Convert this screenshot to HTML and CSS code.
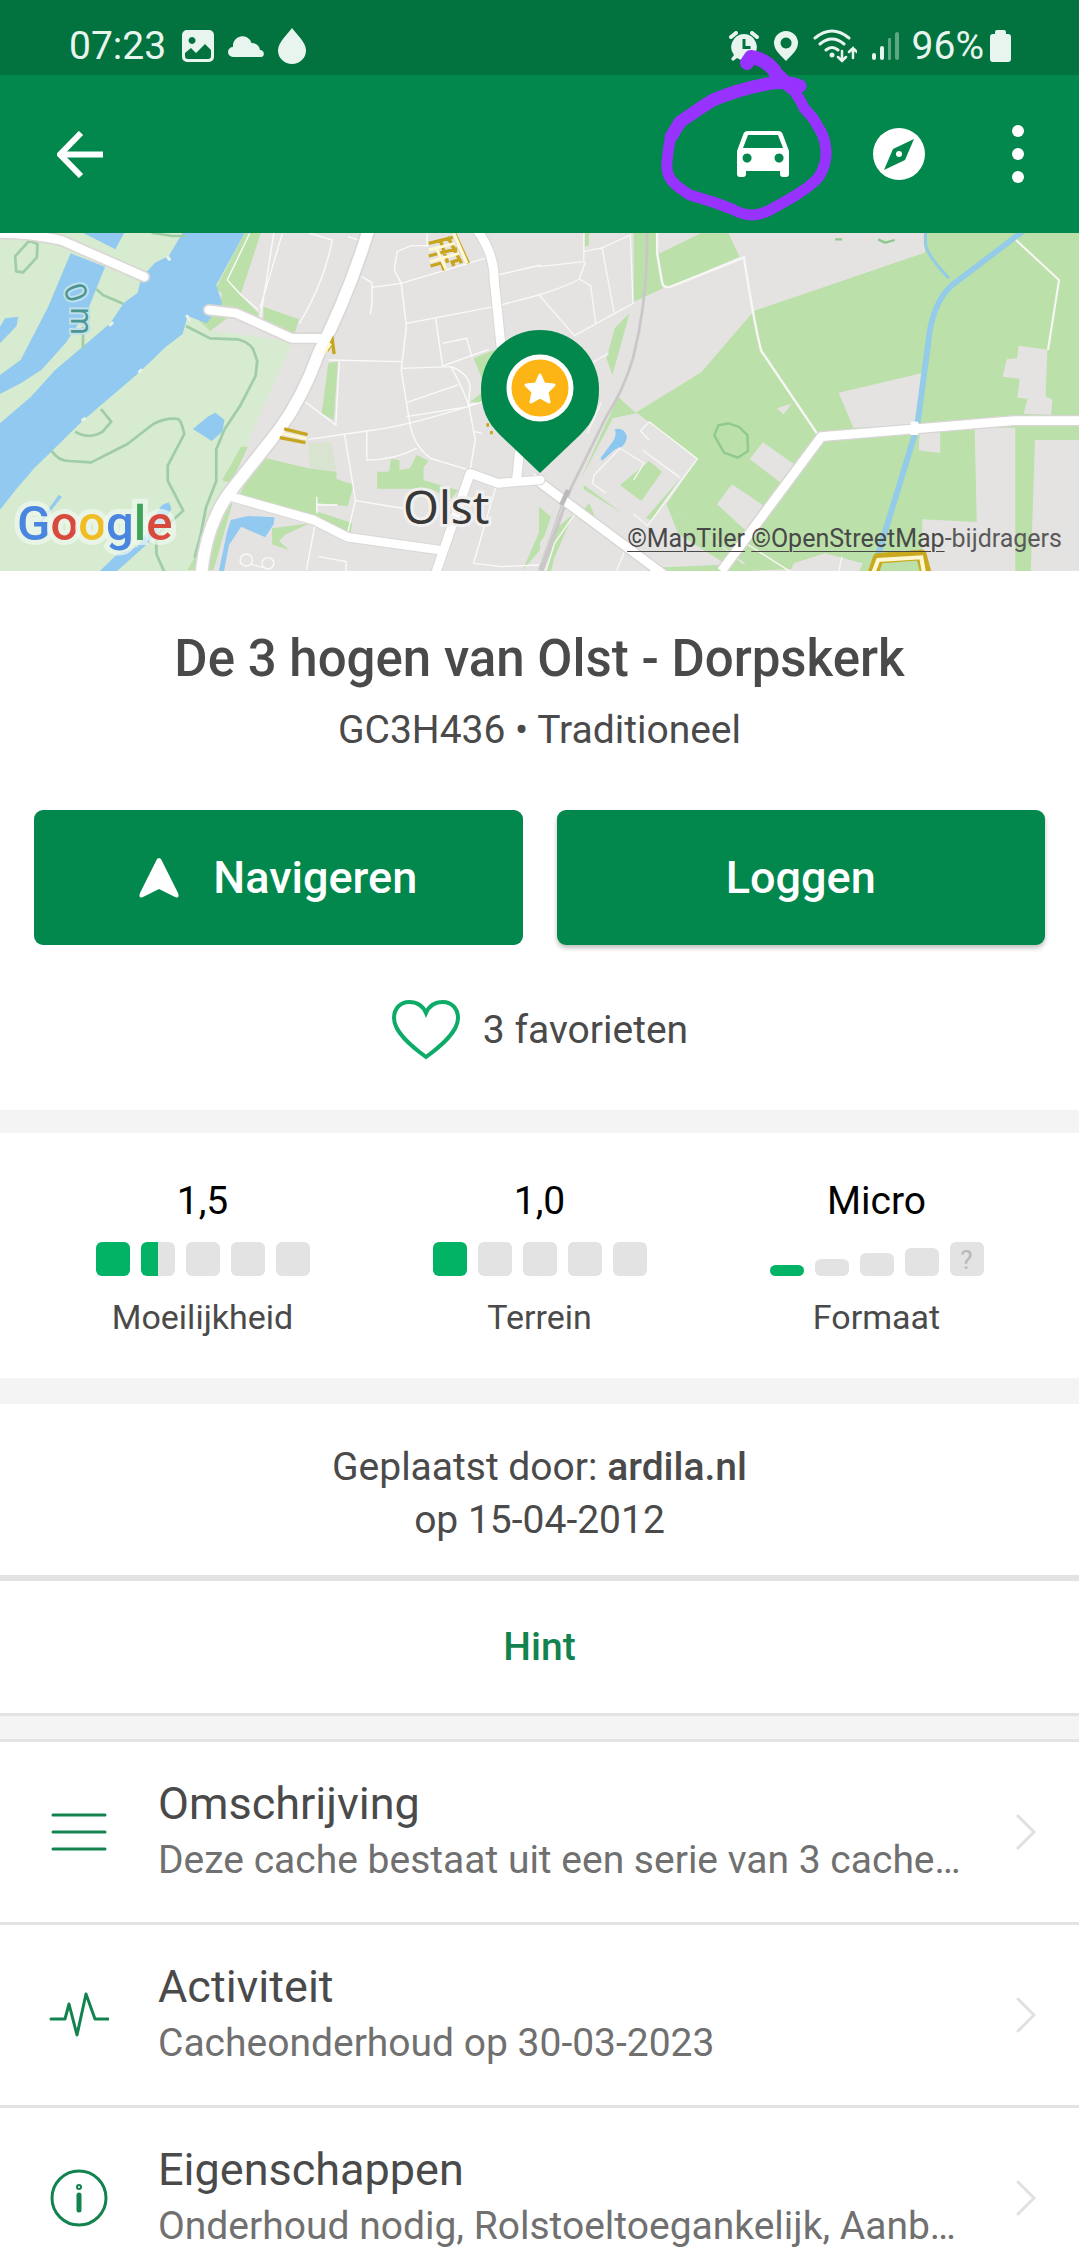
FILE: index.html
```html
<!DOCTYPE html>
<html lang="nl">
<head>
<meta charset="utf-8">
<meta name="viewport" content="width=device-width, initial-scale=1">
<title>De 3 hogen van Olst - Dorpskerk</title>
<link rel="stylesheet" href="styles.css">
</head>
<body>
<div class="screen">
  <div class="status">
    <div class="status-group">
      <span class="status-text">07:23</span>
      <svg class="st-image" viewBox="0 0 32 32" width="32" height="32"><path fill-rule="evenodd" d="M5 0h22a5 5 0 0 1 5 5v22a5 5 0 0 1-5 5H5a5 5 0 0 1-5-5V5a5 5 0 0 1 5-5zM10 7a3.500 3.500 0 1 0 .1 0zM3 23l6-5 5 5 9-9 6 6v6a3 3 0 0 1-3 3H6a3 3 0 0 1-3-3z"/></svg>
      <svg viewBox="0 0 36 21" width="36" height="21"><path d="M5 21a5 5 0 0 1 0-10 9.500 9.500 0 0 1 18.500-4c5 0 8 3 8.500 7 5 0 5 7 1 7z"/></svg>
      <svg viewBox="0 0 28 36" width="28" height="36"><path d="M14 0c4 6 14 14 14 22.500a14 13.500 0 0 1-28 0C0 14 10 6 14 0z"/></svg>
    </div>
    <div class="status-group status-right">
      <svg viewBox="0 0 30 30" width="30" height="30"><path fill-rule="evenodd" d="M15 3a13 13 0 0 1 10 21l3 4-2 2-4-3a13 13 0 0 1-14 0l-4 3-2-2 3-4A13 13 0 0 1 15 3zM13.500 8v10h8v-3h-5V8z"/><path d="M2 6l5-4M28 6l-5-4" stroke="#e8f5ee" stroke-width="4" stroke-linecap="round"/></svg>
      <svg viewBox="0 0 24 30" width="24" height="30"><path fill-rule="evenodd" d="M12 0a12 12 0 0 1 12 12c0 8-9 14-12 18C9 26 0 20 0 12A12 12 0 0 1 12 0zM12 6.500a5.500 5.500 0 1 0 .1 0z"/></svg>
      <svg viewBox="0 0 44 34" width="44" height="34"><g fill="none" stroke="#e8f5ee" stroke-width="3" stroke-linecap="round"><path d="M2 9q17-14 34 0M7 15q12-10 24 0M13 21q6-5 12 0"/><path stroke-width="2.500" d="M29 22v10M25 28l4 4 4-4M40 29V19M36 23l4-4 4 4"/></g><circle cx="19" cy="26" r="2.500"/></svg>
      <svg viewBox="0 0 27 30" width="27" height="30"><rect y="22" width="4" height="7" rx="2"/><rect x="8" y="15" width="4" height="14" rx="2"/><rect x="16" y="7" width="3" height="22" rx="1" opacity=".4"/><rect x="23" y="1" width="4" height="28" rx="2" opacity=".4"/></svg>
      <span class="status-text percent">96%</span>
      <svg viewBox="0 0 21 32" width="21" height="32"><path d="M7 0h7a2 2 0 0 1 2 2v2h2a3 3 0 0 1 3 3v22a3 3 0 0 1-3 3H3a3 3 0 0 1-3-3V7a3 3 0 0 1 3-3h2V2a2 2 0 0 1 2-2z"/></svg>
    </div>
  </div>

  <header class="appbar">
    <button class="icon-button" aria-label="Terug"><svg viewBox="0 0 46 47" width="46" height="47"><path d="M24 2L3 23.500 24 45M3 23.500h43" fill="none" stroke="#fff" stroke-width="6"/></svg></button>
    <div class="actions">
      <button class="icon-button" aria-label="Route"><svg viewBox="0 0 52 46" width="52" height="46"><path fill="#fff" fill-rule="evenodd" d="M11 0h30c3 0 4 1 5 4l6 16v23q0 3-3 3h-3q-3 0-3-3v-3H9v3q0 3-3 3H3q-3 0-3-3V20L6 4c1-3 2-4 5-4zM11 4L6 17h40L41 4zM10 22.500a4.500 4.500 0 1 0 .1 0zM42 22.500a4.500 4.500 0 1 0 .1 0z"/></svg></button>
      <button class="icon-button" aria-label="Kompas"><svg viewBox="0 0 52 52" width="52" height="52"><circle cx="26" cy="26" r="26" fill="#fff"/><path d="M41 11L32 32 11 42 20 21z" fill="#02874d"/><circle cx="26" cy="26" r="3" fill="#fff"/></svg></button>
      <button class="icon-button" aria-label="Meer"><svg viewBox="0 0 12 58" width="12" height="58"><g fill="#fff"><circle cx="6" cy="6" r="6"/><circle cx="6" cy="29" r="6"/><circle cx="6" cy="52" r="6"/></g></svg></button>
    </div>
    <svg class="scribble" viewBox="0 0 176 176" width="176" height="176"><g fill="none" stroke="#9732ff" stroke-linecap="round" stroke-linejoin="round"><path stroke-width="14" d="M84 17L88 11Q102 13 111 24"/><path stroke-width="13" d="M137 40Q122 34 104 38 76 43 50 54L36 63 17 76 8 91"/><path stroke-width="11" d="M8 91Q5 102 4 117 3 128 9 135 14 141 27 149L50 156 69 163Q80 169 89 169 97 169 107 164L130 151Q148 140 155 132 164 119 163 104 162 92 157 84L150 72 141 62Q135 48 122 34L109 22"/><path stroke-width="12" d="M112 30L128 42"/></g></svg>
  </header>

  <section class="map" aria-label="Kaart van Olst">
    <svg class="map-art" viewBox="0 0 1079 338" preserveAspectRatio="xMidYMid slice">
      <rect width="1079" height="338" fill="#e4e3e2"/>
      <!-- east: fields, rail, canal -->
      <g transform="translate(539 -3) scale(.3444 .3333)">
        <g fill="#bbe0a9">
          <path d="M275 0h65l20 175-85 40zM133 0h12v45l-12 5zM345 73L400 45 470 10h80l32 70-210 93-15-5zM624 243L1120 68 1122 0h450v1030H940L880 1010 600 1023 370 1023 120 850zM230 500L280 548 490 415 645 368 830 620 640 900 560 1023 455 900 370 823 460 687 285 550 215 565 120 750z"/>
          <path d="M263 250l-50 185-17-50 24-90z"/>
        </g>
        <path d="M120 755l95-190 70-15 175 137-90 136 90 68 140 110-500 23 20-80 40-90zM870 488l240-58-12 158-185 5zM650 637l90 65-40 55-88-70zM560 763l90 62-48 78-85-80zM1105 607h60v62l-62-8zM1265 593h118v430h-270V868l158 8zM1440 630h128v393H1428zM1393 347l83 12-5 140 20 10-4 45-80-3 12-45-30-3 7-57-50-6 12-52 30-3zM690 535l45-15-25 33zM740 1000l90-30 110 30-10 25H730z" fill="#e4e3e2"/>
        <path d="M235 765L320 693l37 32-60 88zM130 765l112 85-112-72zM310 865l100-120-85 125zM370 823l90 68 130 110-15 22-170-110zM20 1023L45 900 100 852l-55 130-10 41zM0 830l35 30-20 60-15 20z" fill="#bbe0a9"/>
        <path d="M220 598q25-8 35 20 0 20-15 32-20 5-32 20l-25 22-4-8 36-50q12-20 5-36z" fill="#8cc7ef"/>
        <path d="M550 580l30 10 25 25 2 48-30 20-40-15-28-52 12-30z" fill="none" stroke="#90c990" stroke-width="7"/>
        <path d="M860 28h20M985 28l20 10 28-8" fill="none" stroke="#90c990" stroke-width="7"/>
        <path d="M1122 0v40q0 30 68 105" fill="none" stroke="#93cbe8" stroke-width="9"/>
        <path d="M1410 0L1200 165Q1140 220 1130 340L1098 590 970 1023" fill="none" stroke="#93cbe8" stroke-width="17"/>
        <g fill="none" stroke="#f8f7f6" stroke-width="4">
          <path d="M343 0v70l15 90q5 15 25 10L595 82q30 200 50 280L810 615" stroke-width="7"/>
          <path d="M1385 30l125 120-32 210" stroke-width="6"/>
          <path d="M0 110l130-15V0M130 65l55-12 80-38 8 205-170 97L0 195q90-30 117-48l18-52M117 147l33 20 15 115M183 53l35 195M150 400l52-30M180 520l-40 90M320 575l140 112-145 200-40-35M320 575l-25 28 25 28M300 660l110 83M195 790l-40-30 5-25 75-80 70 45-30 50M105 850L45 940 20 1023M250 960l-25 63M600 940l130 85M880 980l-10 45"/>
        </g>
        <path d="M313 0q5 200-40 385-30 100-75 170L95 770 10 990" fill="none" stroke="#c9c7c7" stroke-width="8"/>
        <path d="M80 800L5 1023" fill="none" stroke="#c9c7c7" stroke-width="16"/>
        <path d="M75 810L5 1000" fill="none" stroke="#e4e3e2" stroke-width="2"/>
        <g fill="none" stroke="#d8d5d4" stroke-width="34"><path d="M-20 740L370 1040M530 1023L820 620 1380 572h190"/></g>
        <g fill="none" stroke="#fff" stroke-width="26" stroke-linejoin="round"><path d="M-20 740L370 1040M530 1023L820 620 1380 572h190"/></g>
        <path d="M1090 575v40" stroke="#fff" stroke-width="22"/>
        <path d="M85 780L65 825" stroke="#bbb" stroke-width="14"/>
        <path d="M970 1030l15-45 125-10 15 60" fill="none" stroke="#c8a91f" stroke-width="32" stroke-linejoin="round"/>
        <path d="M970 1030l15-40 125-8 10 60" fill="none" stroke="#fff8d2" stroke-width="12"/>
      </g>
      <!-- west: river IJssel, floodplain and village -->
      <g transform="translate(0 -3) scale(.3444 .3333)">
        <path d="M0 0h715l-85 170-30 130 250 35-140 320-100 200-60 175H0z" fill="#d6ebcf"/>
        <path d="M715 0h45l-60 190-35-30 85 90 0 15-65-20-75 58-40-40 60-30 15-40-17-20zM765 230l103 38-13 45-90-45zM953 400l28-5-12 175-35-20zM755 680l140 35 82 10v22l50 17-17 65-92-10v25l105 35-5 30-110-45-215-65zM700 650h20l-50 110-25-10zM1095 725h35l5-38 25 3v30l30-5 20-40 35 18-15 18v40l100 30-20 25-60-30h-155zM790 895l110-15-70 33-20 20 30 28-50-18zM640 840l35-20-55 200H545zM1375 385l60-25-30 100zM1365 515l50-40v45zM1568 900l-50 120 50-60z" fill="#bbe0a9"/>
        <path d="M895 640l65-5 18 88-78-10z" fill="#d8e3d0"/>
        <g fill="#91c9f0">
          <path d="M535 0h180l-87 165 17 55-45 60-55-22-15 54-50 40-75 75-85 75-80 70-90 92-50 50-50 60-50 65V580l90-80 70-80 80-70 80-70 40-62 40-30 10-45 40-45 40-20z"/>
          <path d="M205 70l100 40-50 130-65 100-70 80-60 40-60 32v-57l60-45 80-160zM225 0h140l-30 58zM0 290l15-25 38-5-5 28L0 340zM560 597l42-36 23-13 27 22-7 35-30 28zM290 1023l50-50 60-23 70-125 20-8 8 18-18 35-50 70-90 83zM670 870l50-12 77 4-2 20-25 40-70-32-35 55-15 80h-15l25-123zM105 890l65-95 10 5-65 85z"/>
        </g>
        <g fill="none" stroke="#a0cda8" stroke-width="8" stroke-linejoin="round">
          <path d="M85 32l24 10-2 40-40 45-20-3-3-45zM440 8l60 10h40M280 178l20 18 58 25M241 290v65M540 288l70 37 80 3q35 10 45 30l12 35-5 45-45 90-45 70-24 60v95l-30 80-15 80-18 70M293 537l30 38-25 30q-40 25-80 0M150 663q20 30 50 30l65 4 105-55 75-60q40-20 72-15 10 5 18 45l-48 95v45l45 90-78 75v55l25 58"/>
        </g>
        <g fill="none" stroke="#fafafa" stroke-width="4">
          <path d="M725 10L660 150l40 45 50 45M795 10l-40 260M820 10l-65 225M900 10l65 20q-25 130-95 250M1050 140l30 18 0 65-5 30M1080 172l85-12 243-75M1165 160l-20-40 8-55 40-18h50M1165 160l15 130-15 130 25 160q10 65 60 105l110 35M1180 280l255-50 130-35M1265 265l20 143 135-50M1285 340l70-15 15 55M955 390l210 5M1165 415l145-5q50 100 50 120l-180 30M1330 465l-150 53M1310 410q50 20 55 60l-5 55 25-5M985 395l-10 190-90-70M895 628l170-25q110-10 345-90M1000 610l32 200-25 110M1065 600v90q80 0 145-35M1360 520l20 110-15 90M1400 610l-22-5M1032 812l150 25M915 880l-25 140M925 980l80 15 0 28M1445 135l125-30M1240 10v40M1010 20l60 20M1440 770l-65 230 80 10 110-5M920 800v50M980 825h-60"/>
          <circle cx="715" cy="990" r="18"/><circle cx="778" cy="1000" r="17"/><path d="M728 1003l38 10"/>
        </g>
        <path d="M543 258l7 12M320 285l6-6M487 82l5 6M405 425l5-5M240 570l6-4" stroke="#e9f3e5" stroke-width="9" stroke-linecap="round"/>
        <g fill="none" stroke="#dad7d6" stroke-width="36" stroke-linecap="round" stroke-linejoin="round">
          <path d="M0 10q90 0 180 22l238 108M607 240l80 10 160 75 90 0"/>
          <path d="M670 800l240 70 100 52 265 38" stroke-width="32"/>
          <path d="M1385 0q50 70 50 150l20 200M1265 1030l100-300 80 30 123-10M1500 750l8-80" stroke-width="32"/>
          <path d="M1070 0q-60 200-145 370-45 130-115 230L680 770q-80 100-95 260" stroke-width="44"/>
        </g>
        <g fill="none" stroke="#fff" stroke-width="26" stroke-linecap="round" stroke-linejoin="round">
          <path d="M0 10q90 0 180 22l238 108M607 240l80 10 160 75 90 0"/>
          <path d="M670 800l240 70 100 52 265 38"/>
          <path d="M1385 0q50 70 50 150l20 200M1265 1030l100-300 80 30 123-10M1500 750l8-80"/>
          <path d="M1070 0q-60 200-145 370-45 130-115 230L680 770q-80 100-95 260" stroke-width="34"/>
        </g>
        <g fill="none" stroke="#c8a51f" stroke-width="10">
          <path d="M1245 40l70-18M1245 78l82-22M1250 108l32-9 8 22M1318 108l-5-12 24-8M1278 28l22 70M1320 10l40 90M1300 20l40 80M812 623l75 15M825 597l68 17M950 362l15-30 5 40M1412 585h8M1423 608h8"/>
        </g>
        <g fill="none" stroke="#fff8d2" stroke-width="9"><path d="M1245 60l75-20M1248 95l85-25M1265 50l30 68M1318 10l38 90M818 610l72 16M940 370l20-30"/></g>
      </g>
      <g class="contour-label"><text transform="translate(63 55) rotate(70)">0</text><text transform="translate(71 74) rotate(90)">m</text></g>
      <text class="town" x="403" y="291">Olst</text>
      <path d="M540 97a59 59 0 0 1 59 59c0 20-6 33-19 46l-40 38-40-38c-13-13-19-26-19-46a59 59 0 0 1 59-59z" fill="#02874d"/>
      <circle cx="540" cy="155" r="31" fill="#fdb515" stroke="#fff" stroke-width="5"/>
      <path d="M540 142l4 9 10 1-7 7 2 10-9-5-9 5 2-10-7-7 10-1z" fill="#fff" stroke="#fff" stroke-width="3" stroke-linejoin="round"/>
    </svg>
    <div class="map-foot">
      <div class="google"><span class="g-blue">G</span><span class="g-red">o</span><span class="g-yellow">o</span><span class="g-blue">g</span><span class="g-green">l</span><span class="g-red">e</span></div>
      <div class="credit"><a href="#maptiler">©MapTiler</a> <a href="#osm">©OpenStreetMap</a>-bijdragers</div>
    </div>
  </section>

  <main>
    <section class="intro">
      <h1>De 3 hogen van Olst - Dorpskerk</h1>
      <p class="code">GC3H436 • Traditioneel</p>
      <div class="buttons">
        <button class="primary"><svg viewBox="0 0 40 40" width="40" height="40"><path d="M20 0q2 0 3 3l16 32q2 6-3 4L20 31 4 39q-5 2-3-4L17 3q1-3 3-3z" fill="#fff"/></svg>Navigeren</button>
        <button class="primary raised">Loggen</button>
      </div>
      <div class="favorites"><svg viewBox="0 0 70 60" width="70" height="60"><path d="M35 57C20 46 3 32 3 18 3 8 10 2 18 2c8 0 14 4 17 11C38 6 44 2 52 2c8 0 15 6 15 16 0 14-17 28-32 39z" fill="none" stroke="#0cab67" stroke-width="4"/></svg><span>3 favorieten</span></div>
    </section>

    <section class="stats">
      <div class="stat"><p class="value">1,5</p><div class="boxes"><i class="box full"></i><i class="box half"></i><i class="box"></i><i class="box"></i><i class="box"></i></div><p class="label">Moeilijkheid</p></div>
      <div class="stat"><p class="value">1,0</p><div class="boxes"><i class="box full"></i><i class="box"></i><i class="box"></i><i class="box"></i><i class="box"></i></div><p class="label">Terrein</p></div>
      <div class="stat"><p class="value">Micro</p><div class="boxes"><i class="box full size-1"></i><i class="box size-2"></i><i class="box size-3"></i><i class="box size-4"></i><span class="box unknown">?</span></div><p class="label">Formaat</p></div>
    </section>

    <section class="owner">
      <p>Geplaatst door: <b>ardila.nl</b></p>
      <p>op 15-04-2012</p>
    </section>
    <button class="hint">Hint</button>

    <nav class="list">
      <a class="row" href="#omschrijving">
        <svg class="row-icon" viewBox="0 0 60 60" width="60" height="60"><path d="M4 13h52M4 30h52M4 47h52"/></svg>
        <span class="row-text"><span class="row-title">Omschrijving</span><span class="row-sub">Deze cache bestaat uit een serie van 3 cache…</span></span>
        <svg class="chevron" viewBox="0 0 20 36" width="20" height="36"><path d="M2 2l16 16L2 34"/></svg>
      </a>
      <a class="row" href="#activiteit">
        <svg class="row-icon" viewBox="0 0 60 60" width="60" height="60"><path d="M2 34h14l4-15 8 31 9-41 9 25h13"/></svg>
        <span class="row-text"><span class="row-title">Activiteit</span><span class="row-sub">Cacheonderhoud op 30-03-2023</span></span>
        <svg class="chevron" viewBox="0 0 20 36" width="20" height="36"><path d="M2 2l16 16L2 34"/></svg>
      </a>
      <a class="row" href="#eigenschappen">
        <svg class="row-icon" viewBox="0 0 60 60" width="60" height="60"><circle cx="30" cy="30" r="27"/><path stroke-width="5" d="M30 27v15"/><circle cx="30" cy="19" r="1" stroke-width="4"/></svg>
        <span class="row-text"><span class="row-title">Eigenschappen</span><span class="row-sub">Onderhoud nodig, Rolstoeltoegankelijk, Aanb…</span></span>
        <svg class="chevron" viewBox="0 0 20 36" width="20" height="36"><path d="M2 2l16 16L2 34"/></svg>
      </a>
    </nav>
  </main>
</div>
</body>
</html>
```
FILE: styles.css
```css
* { box-sizing: border-box; }
body, h1, p { margin: 0; }
body {
  font-family: Roboto, sans-serif;
  font-size: 39px;
  color: #4a4a4a;
  background: #fff;
}
button { font: inherit; border: 0; padding: 0; background: none; color: inherit; }
svg { display: block; flex: none; }
.screen { height: 100vh; overflow: hidden; }

.status {
  display: flex;
  justify-content: space-between;
  height: 75px;
  padding: 16px 68px 0 69px;
  background: #02723f;
  color: #e8f5ee;
  fill: #e8f5ee;
}
.status-group { display: flex; align-items: center; height: 60px; gap: 14px; }
.status-group .st-image { margin-left: 2px; }
.status-right { gap: 15px; }
.status-text { line-height: 60px; font-size: 39px; }
.percent { margin: 0 -9px 0 -2px; }

.appbar {
  position: relative;
  display: flex;
  align-items: center;
  justify-content: space-between;
  height: 158px;
  padding: 0 55px 0 57px;
  background: #02874d;
}
.actions { display: flex; align-items: center; }
.actions .icon-button + .icon-button { margin-left: 84px; }
.actions .icon-button:last-child { margin-left: 87px; }
.scribble { position: absolute; right: 240px; top: -29px; overflow: visible; pointer-events: none; }

.map { position: relative; height: 338px; overflow: hidden; }
.map-art { width: 100%; height: 100%; }
.town {
  font: 46px "Noto Sans", sans-serif;
  fill: #383838;
  stroke: #f1f0ef;
  stroke-width: 6px;
  paint-order: stroke;
}
.contour-label {
  font: 30px "Noto Sans", sans-serif;
  fill: #4b9690;
  stroke: #bfe0ec;
  stroke-width: 4px;
  paint-order: stroke;
}
.map-foot {
  position: absolute;
  inset: auto 0 0 0;
  display: flex;
  align-items: flex-end;
  justify-content: space-between;
  padding: 0 17px 17px;
}
.google {
  font-size: 49px;
  font-weight: 500;
  line-height: 60px;
  -webkit-text-stroke: 10px rgba(240, 248, 240, .7);
  paint-order: stroke;
}
.g-blue { color: #4a86e0; }
.g-red { color: #d94a3e; }
.g-yellow { color: #f0bd25; }
.g-green { color: #40a35a; }
.credit { font-size: 25px; line-height: 30px; color: #5a5a5a; }
.credit a { color: #484848; text-underline-offset: 4px; text-decoration-thickness: 1px; }

.intro { padding: 58px 34px 50px; text-align: center; }
h1 { font-size: 51px; line-height: 60px; font-weight: 500; }
.code { margin-top: 15px; line-height: 52px; }
.buttons { display: grid; grid-template-columns: 1fr 1fr; gap: 34px; margin-top: 54px; }
.primary {
  display: flex;
  align-items: center;
  justify-content: center;
  gap: 34px;
  height: 135px;
  border-radius: 9px;
  background: #02874d;
  color: #fff;
  font-size: 45px;
  font-weight: 500;
}
.raised { box-shadow: 0 3px 5px rgba(0, 0, 0, .25); }
.favorites {
  display: flex;
  align-items: center;
  justify-content: center;
  gap: 22px;
  height: 60px;
  margin-top: 55px;
}

.stats {
  display: grid;
  grid-template-columns: repeat(3, 1fr);
  padding: 42px 34px 38px;
  border-top: 23px solid #f4f4f4;
  border-bottom: 26px solid #f4f4f4;
  text-align: center;
}
.value { line-height: 52px; color: #000; }
.boxes { display: flex; justify-content: center; align-items: flex-end; gap: 11px; height: 34px; margin: 15px 0 18px; }
.box { width: 34px; height: 34px; border-radius: 6px; background: #e3e3e3; }
.full { background: #02b265; }
.half { background: linear-gradient(90deg, #02b265 50%, #e3e3e3 50%); }
.size-1 { height: 11px; }
.size-2 { height: 17px; }
.size-3 { height: 23px; }
.size-4 { height: 28px; }
.unknown { font-size: 26px; line-height: 36px; color: #b8b8b8; }
.label { font-size: 34px; line-height: 46px; }

.owner { padding: 37px 34px 28px; border-bottom: 6px solid #e3e3e3; text-align: center; line-height: 53px; }
.owner b { font-weight: 500; }
.hint { display: block; width: 100%; height: 132px; color: #12834e; font-weight: 500; }

.list { border-top: 3px solid #e3e3e3; }
.list::before { content: ""; display: block; height: 23px; background: #f4f4f4; }
.row {
  display: flex;
  align-items: center;
  height: 183px;
  padding: 0 43px 0 49px;
  border-top: 3px solid #e3e3e3;
  color: inherit;
  text-decoration: none;
}
.row-icon { fill: none; stroke: #12834e; stroke-width: 3px; stroke-linecap: round; stroke-linejoin: round; }
.row-text { display: flex; flex-direction: column; flex: 1; min-width: 0; padding-left: 49px; line-height: 56px; white-space: nowrap; }
.row-title { font-size: 45px; }
.row-sub { color: #707070; }
.chevron { fill: none; stroke: #e0e0e0; stroke-width: 3px; stroke-linecap: round; }
```
